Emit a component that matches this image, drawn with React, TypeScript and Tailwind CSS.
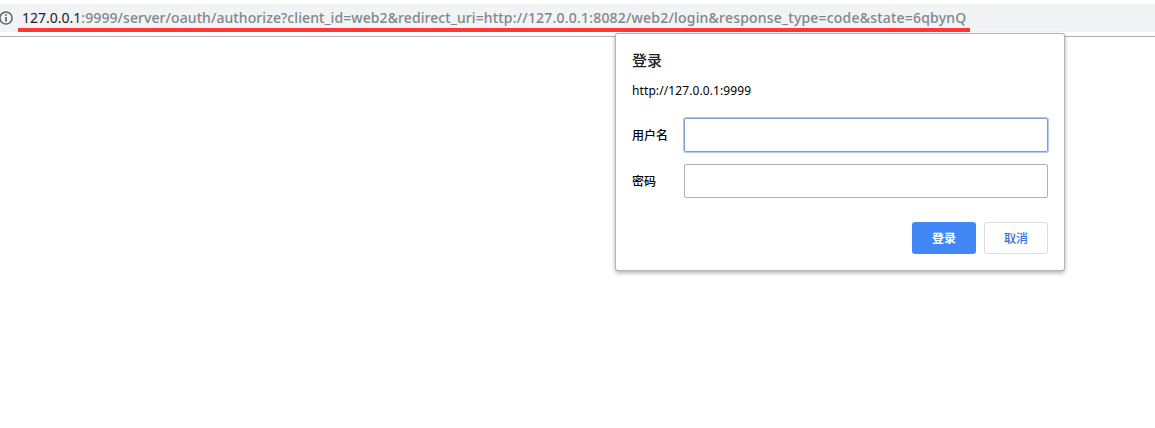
export default function App() {
  return (
    <div className="relative h-[428px] w-[1155px] overflow-hidden bg-white font-['Noto_Sans','Noto_Sans_CJK_SC',sans-serif]">
      <header className="flex h-[37px] flex-col border-b border-[#b2b2b2] pt-1">
        <div className="flex h-7 bg-[#f1f3f4]">
          <svg className="-ml-px mt-[7px] h-[14px] w-[14px] shrink-0" viewBox="0 0 14 14" fill="none" stroke="#5f6368" strokeWidth="1.5">
            <circle cx="7" cy="7" r="6.1" />
            <path d="M7 6v4.5M7 3.2v1.6" strokeWidth="1.7" />
          </svg>
          <div className="ml-[5px] h-7 w-[952px] border-b-4 border-[#ff3836] pl-1 text-[14px] leading-[28px] whitespace-nowrap text-[#80868b]">
            <span className="text-[#202124]">127.0.0.1</span>
            <span className="font-medium tracking-[0.08px]">:9999/server/oauth/authorize?client_id=web2&amp;redirect_uri=</span>
            <span className="font-medium tracking-[0.2px]">http://127.0.0.1:8082/web2/login&amp;response_type=code&amp;state=6qbynQ</span>
          </div>
        </div>
      </header>
      <form className="absolute left-[616px] top-[34px] flex h-[236px] w-[448px] flex-col rounded-[2px] bg-white px-4 text-[12px] text-[#000] shadow-[0_0_0_1px_#b4b4b4,0_1px_0_0_#999,0_2px_4px_1px_rgba(0,0,0,0.3)]">
        <h1 className="mt-[14px] text-[15px] leading-6 font-medium text-[#202124]">登录</h1>
        <p className="mt-[11px] leading-4 tracking-[0.1px]">http://127.0.0.1:9999</p>
        <label className="mt-[19px] flex h-[34px] items-center">
          <span className="w-[52px] pt-px font-medium">用户名</span>
          <input className="h-[34px] w-[364px] rounded-[2px] border border-[#7d9cd0] shadow-[0_0_0_1px_#adcafa] outline-none" />
        </label>
        <label className="mt-3 flex h-[34px] items-center">
          <span className="w-[52px] pt-px font-medium">密码</span>
          <input type="password" className="h-[34px] w-[364px] rounded-[2px] border border-[#b0b0b0] outline-none" />
        </label>
        <div className="mt-6 flex justify-end gap-2">
          <button type="button" className="h-8 w-16 rounded-[3px] bg-[#4285f4] pt-px font-bold text-white">登录</button>
          <button type="button" className="h-8 w-16 rounded-[3px] border border-[#dadce0] pt-px font-medium text-[#3770e2]">取消</button>
        </div>
      </form>
    </div>
  );
}
